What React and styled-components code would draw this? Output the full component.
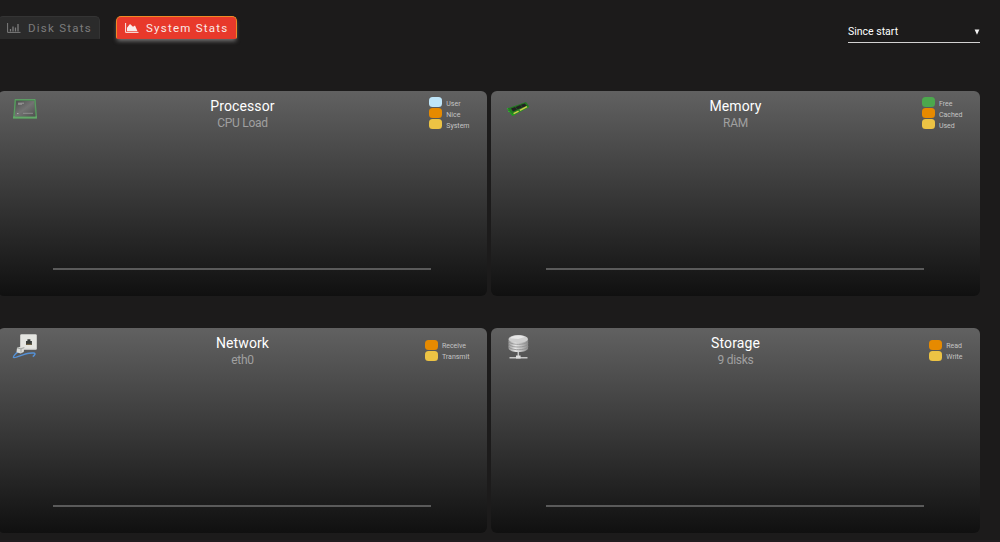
import React from "react";
import styled, { createGlobalStyle } from "styled-components";

const blue = "#bfe6fa";
const orange = "#e68a00";
const yellow = "#ecc344";
const green = "#4ca84d";

const CpuIcon = () => (
  <svg width="26" height="26" viewBox="0 0 26 26">
    <defs>
      <linearGradient id="cpu" x1="0" y1="0" x2="1" y2="1">
        <stop offset="0" stopColor="#4c4c4c" />
        <stop offset="0.5" stopColor="#737373" />
        <stop offset="1" stopColor="#505050" />
      </linearGradient>
    </defs>
    <path d="M2.7 3h21l1.3 19.5H1z" fill="#4b8a52" />
    <path d="M1 20.5h24v2H1z" fill="#62a866" />
    <path d="M3.2 3.5h19.8l1.4 17.5H2z" fill="none" stroke="#6fae75" strokeWidth=".5" />
    <path d="M4.2 4.7h18l1.2 15.7H2.8z" fill="url(#cpu)" />
    <path d="M6 7.2h6M6 8.2h4" stroke="#aaa" strokeWidth=".8" />
    <path d="M11 17.3h10" stroke="#999" strokeWidth=".8" />
    <path d="M5 17.5h1.5" stroke="#aaa" />
  </svg>
);

const RamIcon = () => (
  <svg width="26" height="26" viewBox="0 0 26 26">
    <path d="M2 12.5 21 6l3.2 4.6L7.5 19.5z" fill="#237a22" />
    <path d="M2 12.5 5 17l2.5 3L24.2 11l-.3-1L7.5 18z" fill="#1f9c1f" />
    <path d="m6 12.5 4-1.4 2 2.7-4 1.7zM10.5 10.9l4.7-1.8 2.2 2.5-5 2zM15.8 8.8l3.9-1.4 2 2.4-4 1.7z" fill="#222" />
    <path d="m8.6 17.6 5-2.5M14.8 14.4l7.2-3.8" stroke="#d3c94b" strokeWidth="1.6" />
    <path d="m2.3 12.3.8 1.2M3.3 15l1 1" stroke="#35c035" strokeWidth="1" />
  </svg>
);

const NetworkIcon = () => (
  <svg width="26" height="26" viewBox="0 0 26 26">
    <rect x="8.2" y="1.2" width="16.6" height="15.6" rx="1.3" fill="#e4e5e1" />
    <path d="M8.7 16.3h15.6" stroke="#bbb" strokeWidth=".7" />
    <path d="M14 7.9h1.4V6.2h3v1.7h1.5v4H14z" fill="#393d3a" />
    <path d="M14.3 11.4h5.3" stroke="#8d784b" strokeWidth=".8" />
    <path d="M7 17.8c-3 2.5-6 5.6-5.5 6.6.8 1.3 10-3.5 15.5-4.2 4-.5 6.5-.4 5.8 1.4-.3.8-1.2 1.5-2 2" fill="none" stroke="#5591d6" strokeWidth="1.5" />
    <path d="m5 14.7 3.5-1 4 .5-.8 4.8-3 1.5-4.2-1.3z" fill="#d9dad7" />
    <path d="m5 15 4 .8 3.3-1.2M9 15.7v4" stroke="#969a97" strokeWidth=".8" fill="none" />
  </svg>
);

const StorageIcon = () => (
  <svg width="26" height="26" viewBox="0 0 26 26">
    <defs>
      <linearGradient id="disk">
        <stop offset="0" stopColor="#999" />
        <stop offset="0.35" stopColor="#e6e6e6" />
        <stop offset="0.7" stopColor="#bbb" />
        <stop offset="1" stopColor="#8c8c8c" />
      </linearGradient>
    </defs>
    <path d="M13.3 18v6M4.5 24.7h18" stroke="#c5c5c5" strokeWidth="1.5" />
    <path d="M11 22.5h4.6v3H11z" fill="#ddd" />
    <path d="M3.5 6v9.3c0 2 4.3 3.8 9.8 3.8s9.8-1.8 9.8-3.8V6z" fill="url(#disk)" />
    <path d="M3.5 8c1 2.3 5 3.3 9.8 3.3s8.8-1 9.8-3.3M3.5 10.7c1 2.3 5 3.3 9.8 3.3s8.8-1 9.8-3.3M3.5 13.4c1 2.3 5 3.3 9.8 3.3s8.8-1 9.8-3.3" fill="none" stroke="#8c8c8c" strokeWidth=".8" />
    <ellipse cx="13.3" cy="6" rx="9.7" ry="3.9" fill="#cecece" />
    <path d="M5.2 5.2c1-1.7 4-2.6 8-2.6 3 0 5 .6 6.5 1.3L13.2 6z" fill="#e8e8e8" />
  </svg>
);

const BarChartIcon = () => (
  <svg width="14" height="12" viewBox="0 0 14 12">
    <path d="M.6 1v9.4h12.9" fill="none" stroke="currentColor" />
    <path d="M3.5 7v2.5M6 4.5v5M8.5 5.5v4M11 2v7.5" stroke="currentColor" strokeWidth="1.3" />
  </svg>
);

const AreaChartIcon = () => (
  <svg width="14" height="12" viewBox="0 0 14 12">
    <path d="M.6 1v9.4h12.9" fill="none" stroke="currentColor" />
    <path d="M2 9.2V5.8L5 2l3 2.7 2-1.2 2.5 5.7z" fill="currentColor" />
  </svg>
);

const cards = [
  {
    title: "Processor",
    subtitle: "CPU Load",
    icon: <CpuIcon />,
    series: [["User", blue], ["Nice", orange], ["System", yellow]],
  },
  {
    title: "Memory",
    subtitle: "RAM",
    icon: <RamIcon />,
    series: [["Free", green], ["Cached", orange], ["Used", yellow]],
  },
  {
    title: "Network",
    subtitle: "eth0",
    icon: <NetworkIcon />,
    series: [["Receive", orange], ["Transmit", yellow]],
  },
  {
    title: "Storage",
    subtitle: "9 disks",
    icon: <StorageIcon />,
    series: [["Read", orange], ["Write", yellow]],
  },
];

const StatCard = ({ title, subtitle, icon, series }) => (
  <Card>
    <CardHeader>
      <IconBox>{icon}</IconBox>
      <Heading>
        <Title>{title}</Title>
        <Subtitle>{subtitle}</Subtitle>
      </Heading>
      <Legend $short={series.length < 3}>
        {series.map(([label, color]) => (
          <LegendItem key={label}>
            <Swatch $color={color} />
            {label}
          </LegendItem>
        ))}
      </Legend>
    </CardHeader>
    <Axis />
  </Card>
);

const App = () => (
  <>
    <GlobalStyle />
    <Page>
      <Toolbar>
        <Tabs>
          <Tab>
            <BarChartIcon />
            <span>Disk Stats</span>
          </Tab>
          <Tab $active>
            <AreaChartIcon />
            <span>System Stats</span>
          </Tab>
        </Tabs>
        <Select>
          <span>Since start</span>
          <svg width="6" height="6" viewBox="0 0 6 6">
            <path d="M.6.4h4.8L3 5.8z" fill="#f2f2f2" />
          </svg>
        </Select>
      </Toolbar>
      <Grid>
        {cards.map((card) => (
          <StatCard key={card.title} {...card} />
        ))}
      </Grid>
      <Footer />
    </Page>
  </>
);

const GlobalStyle = createGlobalStyle`
  body {
    margin: 0;
    background: #1c1b1b;
    overflow: hidden;
    font-family: Roboto, "Noto Sans", sans-serif;
  }

  * {
    box-sizing: border-box;
  }

  svg {
    display: block;
    flex: none;
  }
`;

const Page = styled.div`
  display: flex;
  flex-direction: column;
  width: 1000px;
  height: 542px;
  overflow: hidden;
  background: #1c1b1b;
`;

const Toolbar = styled.div`
  display: flex;
  justify-content: space-between;
  align-items: flex-start;
  height: 91px;
  padding: 16px 20px 0 0;
`;

const Tabs = styled.div`
  display: flex;
  gap: 16px;
  margin-left: -2px;
`;

const Tab = styled.button`
  display: flex;
  align-items: center;
  gap: 7px;
  width: ${({ $active }) => ($active ? "121px" : "102px")};
  height: 23px;
  padding: 0 0 0 8px;
  border: 1px solid ${({ $active }) => ($active ? "#f08a25" : "#343434")};
  border-bottom-color: ${({ $active }) => ($active ? "#e23a2c" : "#2b2b2b")};
  border-radius: 5px 5px ${({ $active }) => ($active ? "2px 2px" : "0 0")};
  background: ${({ $active }) => ($active ? "#e8392b" : "#2b2b2b")};
  color: ${({ $active }) => ($active ? "#f9eae8" : "#7c7c7c")};
  box-shadow: ${({ $active }) => ($active ? "0 3px 4px -1px #777" : "none")};
  font-family: inherit;
  font-size: 11.5px;
  letter-spacing: 1.25px;
  white-space: nowrap;
`;

const Select = styled.div`
  display: flex;
  align-items: center;
  justify-content: space-between;
  width: 132px;
  height: 27px;
  padding: 5px 0 0 0;
  border-bottom: 1px solid #d2d2d2;
  color: #fff;
  font-size: 10.5px;
`;

const Grid = styled.div`
  display: grid;
  grid-template-columns: 489px 489px;
  grid-template-rows: 205px 205px;
  column-gap: 4px;
  row-gap: 32px;
  margin-left: -2px;
`;

const Card = styled.section`
  display: flex;
  flex-direction: column;
  justify-content: space-between;
  padding-bottom: 26px;
  border-radius: 6px;
  background: linear-gradient(#616161 0%, #101010 100%);
`;

const CardHeader = styled.div`
  display: grid;
  grid-template-columns: 90px 1fr 90px;
`;

const IconBox = styled.div`
  padding: 5px 0 0 14px;
`;

const Heading = styled.div`
  padding-top: 6px;
  text-align: center;
`;

const Title = styled.div`
  color: #fff;
  font-size: 14px;
  line-height: 18px;
  letter-spacing: 0.1px;
`;

const Subtitle = styled.div`
  color: #a0a0a0;
  font-size: 12px;
  line-height: 16px;
  letter-spacing: -0.3px;
`;

const Legend = styled.div`
  justify-self: end;
  display: flex;
  flex-direction: column;
  gap: 1px;
  padding: ${({ $short }) => ($short ? "11.5px" : "6px")} 17.5px 0 0;
`;

const LegendItem = styled.div`
  display: flex;
  align-items: center;
  gap: 4px;
  height: 10px;
  padding-top: 3px;
  color: #c4c4c4;
  font-size: 7px;
  line-height: 10px;
`;

const Swatch = styled.span`
  width: 13px;
  height: 10px;
  margin-top: -3px;
  border-radius: 3.5px;
  background: ${({ $color }) => $color};
`;

const Axis = styled.div`
  width: 378px;
  height: 2px;
  margin-left: 55.4px;
  background: #5a5a5a;
`;

const Footer = styled.div`
  height: 2px;
  margin-top: auto;
  background: #211b1f;
`;

export default App;
